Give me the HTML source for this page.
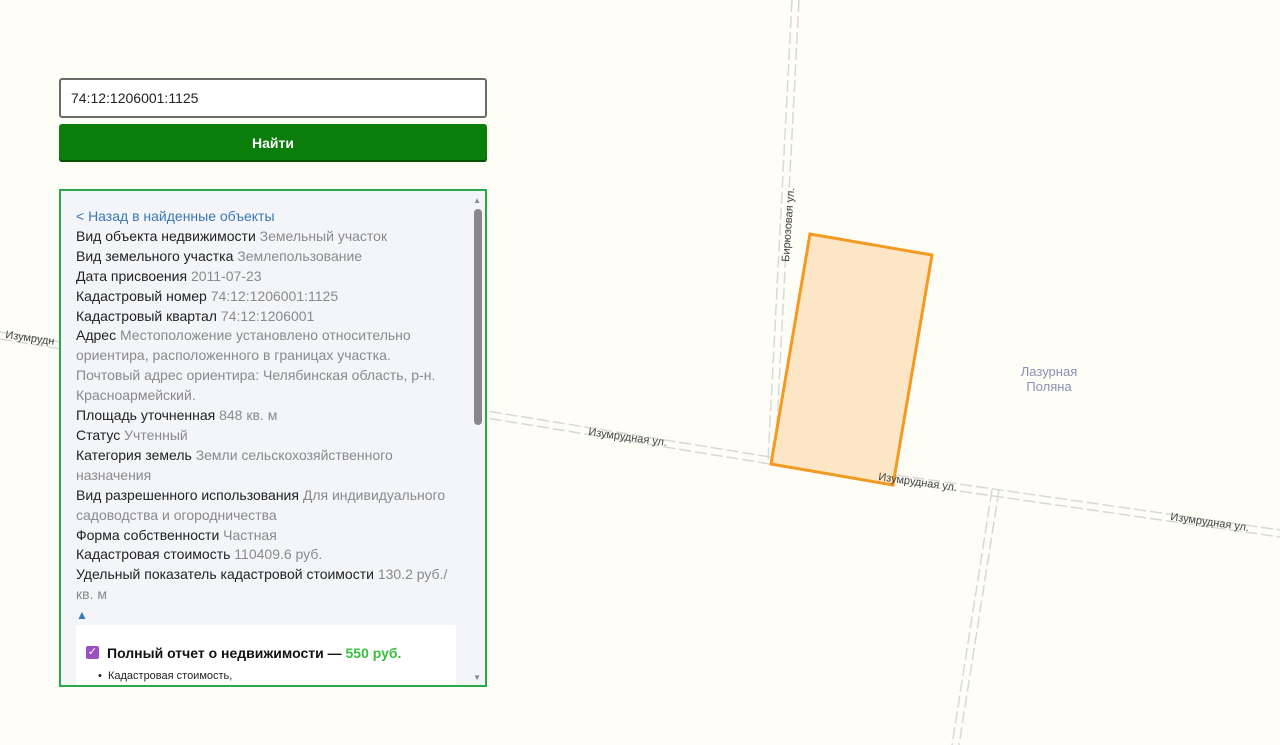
<!DOCTYPE html>
<html><head><meta charset="utf-8"><style>
html,body{margin:0;padding:0;width:1280px;height:745px;overflow:hidden;background:#fefdf6;font-family:"Liberation Sans",sans-serif;}
svg.map{position:absolute;left:0;top:0}
.inp{position:absolute;left:59px;top:78px;height:36px;border:2px solid #6b6b6b;border-radius:3px;background:#fff;font-size:14px;line-height:36px;padding-left:10px;box-sizing:content-box;width:414px;color:#222}
.btn{position:absolute;left:59px;top:124px;width:428px;height:38px;background:#0a7d0a;border-radius:3px;color:#fff;font-weight:bold;font-size:14px;text-align:center;line-height:38px;box-shadow:inset 0 -2px 0 #064f06}
.panel{position:absolute;left:59px;top:189px;width:424px;height:494px;border:2px solid #2aa84a;background:#f3f5f8;overflow:hidden}
.content{position:absolute;left:15px;top:16px;width:380px;font-size:14px;line-height:19.9px;color:#222}
.v{color:#8a8a8a}
a{color:#3a78b6;text-decoration:none}
.sb{position:absolute;right:3px;top:18px;width:8px;height:216px;background:#888;border-radius:4px}
.card{position:absolute;left:15px;top:434px;width:380px;height:70px;background:#fff}
</style></head><body>
<svg class="map" width="1280" height="745">
<g fill="none" stroke="#d8d8d8" stroke-width="1.5" stroke-dasharray="12 4">
<line x1="792" y1="0" x2="768" y2="462"/><line x1="799" y1="0" x2="775" y2="462"/>
<line x1="992" y1="490" x2="952" y2="745"/><line x1="999" y1="490" x2="959" y2="745"/>
<line x1="0" y1="332" x2="770" y2="457"/><line x1="0" y1="339" x2="770" y2="464"/>
<line x1="770" y1="457" x2="1280" y2="530"/><line x1="770" y1="464" x2="1280" y2="537"/>
</g>
<polygon points="810,234 932,255 893,485 771,464" fill="#fde6c6" stroke="#f29a22" stroke-width="3"/>
<g font-family="Liberation Sans,sans-serif" font-size="11" fill="#444">
<text transform="translate(588,435) rotate(8)">Изумрудная ул.</text>
<text transform="translate(878,480) rotate(8)">Изумрудная ул.</text>
<text transform="translate(1170,520) rotate(8)">Изумрудная ул.</text>
<text transform="translate(5,338) rotate(8)">Изумрудн</text>
<text transform="translate(789,262) rotate(-86)">Бирюзовая ул.</text>
</g>
<text x="1049" y="376" font-family="Liberation Sans,sans-serif" font-size="13" fill="#8a8fb8" text-anchor="middle">Лазурная</text>
<text x="1049" y="391" font-family="Liberation Sans,sans-serif" font-size="13" fill="#8a8fb8" text-anchor="middle">Поляна</text>
</svg>
<div class="inp">74:12:1206001:1125</div>
<div class="btn">Найти</div>
<div class="panel">
<div class="content">
<a>&lt; Назад в найденные объекты</a><br>
Вид объекта недвижимости <span class="v">Земельный участок</span><br>
Вид земельного участка <span class="v">Землепользование</span><br>
Дата присвоения <span class="v">2011-07-23</span><br>
Кадастровый номер <span class="v">74:12:1206001:1125</span><br>
Кадастровый квартал <span class="v">74:12:1206001</span><br>
Адрес <span class="v">Местоположение установлено относительно ориентира, расположенного в границах участка. Почтовый адрес ориентира: Челябинская область, р-н. Красноармейский.</span><br>
Площадь уточненная <span class="v">848 кв. м</span><br>
Статус <span class="v">Учтенный</span><br>
Категория земель <span class="v">Земли сельскохозяйственного назначения</span><br>
Вид разрешенного использования <span class="v">Для индивидуального садоводства и огородничества</span><br>
Форма собственности <span class="v">Частная</span><br>
Кадастровая стоимость <span class="v">110409.6 руб.</span><br>
Удельный показатель кадастровой стоимости <span class="v">130.2 руб./ кв. м</span><br>
<span style="color:#3a78b6;font-size:12px">▲</span>
</div>
<div class="card">
<div style="position:absolute;left:10px;top:21px;width:13px;height:13px;background:#9b4fc0;border-radius:2px;color:#fff;font-size:11px;line-height:13px;text-align:center">✓</div>
<div style="position:absolute;left:31px;top:20px;font-size:14px;font-weight:bold;color:#111">Полный отчет о недвижимости — <span style="color:#3bbf3b">550 руб.</span></div>
<div style="position:absolute;left:22px;top:45px;font-size:11px;color:#222">•&nbsp;&nbsp;Кадастровая стоимость,</div>
</div>
<div style="position:absolute;right:4px;top:5px;font-size:8px;color:#888">▲</div>
<div class="sb"></div>
<div style="position:absolute;right:4px;bottom:3px;font-size:8px;color:#888">▼</div>
</div>
</body></html>
